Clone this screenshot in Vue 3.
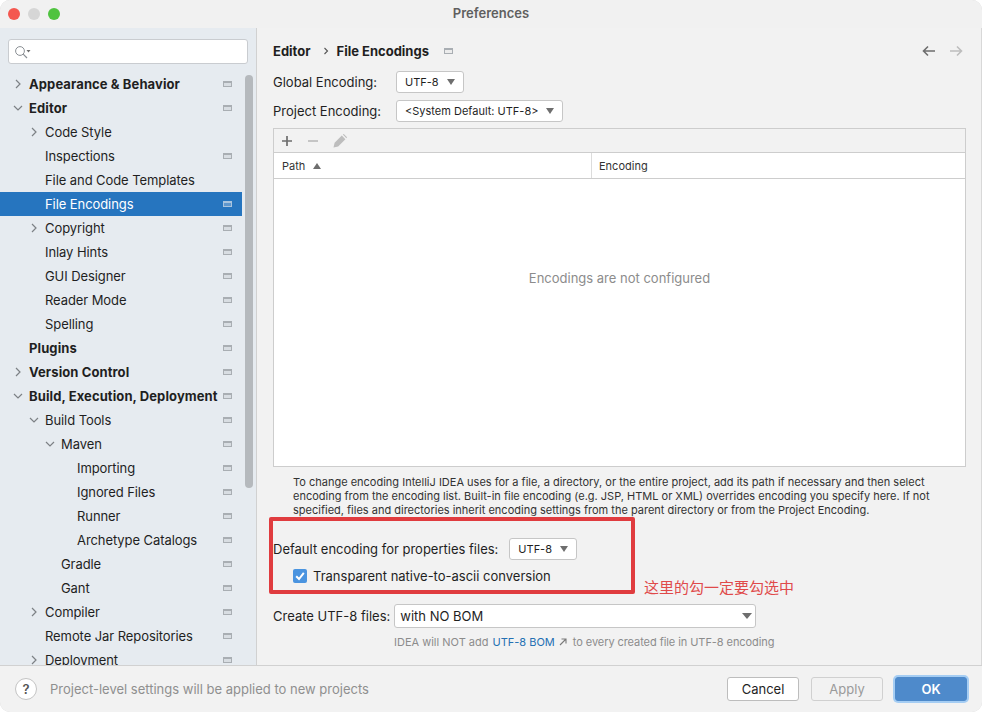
<script setup>
const tree = [
  { label: 'Appearance & Behavior', depth: 0, bold: true, arrow: 'right', badge: true },
  { label: 'Editor', depth: 0, bold: true, arrow: 'down', badge: true },
  { label: 'Code Style', depth: 1, arrow: 'right', badge: false },
  { label: 'Inspections', depth: 1, badge: true },
  { label: 'File and Code Templates', depth: 1, badge: false },
  { label: 'File Encodings', depth: 1, badge: true, selected: true },
  { label: 'Copyright', depth: 1, arrow: 'right', badge: true },
  { label: 'Inlay Hints', depth: 1, badge: true },
  { label: 'GUI Designer', depth: 1, badge: true },
  { label: 'Reader Mode', depth: 1, badge: true },
  { label: 'Spelling', depth: 1, badge: true },
  { label: 'Plugins', depth: 0, bold: true, badge: true },
  { label: 'Version Control', depth: 0, bold: true, arrow: 'right', badge: true },
  { label: 'Build, Execution, Deployment', depth: 0, bold: true, arrow: 'down', badge: true },
  { label: 'Build Tools', depth: 1, arrow: 'down', badge: true },
  { label: 'Maven', depth: 2, arrow: 'down', badge: true },
  { label: 'Importing', depth: 3, badge: true },
  { label: 'Ignored Files', depth: 3, badge: true },
  { label: 'Runner', depth: 3, badge: true },
  { label: 'Archetype Catalogs', depth: 3, badge: true },
  { label: 'Gradle', depth: 2, badge: true },
  { label: 'Gant', depth: 2, badge: true },
  { label: 'Compiler', depth: 1, arrow: 'right', badge: true },
  { label: 'Remote Jar Repositories', depth: 1, badge: true },
  { label: 'Deployment', depth: 1, arrow: 'right', badge: true }
]

const indent = (depth) => ({ paddingLeft: 29 + depth * 16 + 'px' })
const arrowLeft = (depth) => ({ left: 13 + depth * 16 + 'px' })
</script>

<template>
  <div class="window">
    <!-- TITLE BAR -->
    <header class="titlebar">
      <span class="light red"></span>
      <span class="light grey"></span>
      <span class="light green"></span>
      <span class="title">Preferences</span>
    </header>

    <div class="body">
      <!-- SIDEBAR -->
      <aside class="sidebar">
        <div class="search">
          <svg width="17" height="14" viewBox="0 0 17 14">
            <circle cx="6" cy="6" r="4.4" fill="none" stroke="#8a8f94" stroke-width="1" />
            <path d="M9.2 9.2 L13 13" stroke="#8a8f94" stroke-width="1.2" />
            <path d="M12.5 5 h4 l-2 2.4 z" fill="#6e6e6e" />
          </svg>
        </div>
        <div class="tree-wrap">
          <ul class="tree">
            <li
              v-for="item in tree"
              :key="item.label"
              :class="['row', { bold: item.bold, selected: item.selected }]"
              :style="indent(item.depth)"
            >
              <svg v-if="item.arrow" class="arrow" :style="arrowLeft(item.depth)" width="10" height="10" viewBox="0 0 10 10">
                <path v-if="item.arrow === 'right'" d="M3 1 L7 5 L3 9" fill="none" stroke="#7d8185" stroke-width="1.2" />
                <path v-else d="M1 3 L5 7 L9 3" fill="none" stroke="#7d8185" stroke-width="1.2" />
              </svg>
              <span class="row-label">{{ item.label }}</span>
              <span v-if="item.badge" class="badge"></span>
            </li>
          </ul>
          <div class="scroll-thumb"></div>
        </div>
      </aside>

      <!-- CONTENT -->
      <main class="content">
        <div class="heading">
          <span>Editor</span>
          <svg class="crumb" width="6" height="8" viewBox="0 0 6 8"><path d="M1.5 1 L4.5 4 L1.5 7" fill="none" stroke="#555" stroke-width="1.1" /></svg>
          <span>File Encodings</span>
          <span class="badge heading-badge"></span>
          <span class="nav-arrows">
            <svg width="14" height="12" viewBox="0 0 14 12"><path d="M13 6 H2 M6 1.5 L1.5 6 L6 10.5" fill="none" stroke="#6e6e6e" stroke-width="1.6" /></svg>
            <svg width="14" height="12" viewBox="0 0 14 12"><path d="M1 6 H12 M8 1.5 L12.5 6 L8 10.5" fill="none" stroke="#bdbdbd" stroke-width="1.6" /></svg>
          </span>
        </div>

        <div class="form-row global">
          <label class="lbl-wide">Global Encoding:</label>
          <div class="combo small w-68">UTF-8<i class="caret"></i></div>
        </div>
        <div class="form-row project">
          <label class="lbl-wide">Project Encoding:</label>
          <div class="combo small w-167">&lt;System Default: UTF-8&gt;<i class="caret"></i></div>
        </div>

        <section class="table">
          <div class="table-tools">
            <svg width="12" height="12" viewBox="0 0 12 12"><path d="M6 1 V11 M1 6 H11" stroke="#6e6e6e" stroke-width="1.7" /></svg>
            <svg width="12" height="12" viewBox="0 0 12 12"><path d="M1 6 H11" stroke="#bdbdbd" stroke-width="1.7" /></svg>
            <svg width="14" height="14" viewBox="0 0 14 14"><path d="M0.5 13.5 L1.6 8.8 L8.8 1.6 L12.4 5.2 L5.2 12.4 Z M9.8 0.6 L10.8 0 L14 3.2 L13.4 4.2 Z" fill="#bdbdbd" /></svg>
          </div>
          <div class="table-head">
            <div class="col-path">Path<i class="caret-up"></i></div>
            <div class="col-enc">Encoding</div>
          </div>
          <div class="table-empty">Encodings are not configured</div>
        </section>

        <p class="note">To change encoding IntelliJ IDEA uses for a file, a directory, or the entire project, add its path if necessary and then select encoding from the encoding list. Built-in file encoding (e.g. JSP, HTML or XML) overrides encoding you specify here. If not specified, files and directories inherit encoding settings from the parent directory or from the Project Encoding.</p>

        <div class="form-row props">
          <label>Default encoding for properties files:</label>
          <div class="combo small w-68">UTF-8<i class="caret"></i></div>
        </div>
        <div class="check-row">
          <span class="check">
            <svg width="14" height="14" viewBox="0 0 14 14"><path d="M3.2 7.2 L6 10 L10.8 3.8" fill="none" stroke="#fff" stroke-width="2" /></svg>
          </span>
          <span>Transparent native-to-ascii conversion</span>
        </div>
        <div class="form-row create">
          <label>Create UTF-8 files:</label>
          <div class="combo large">with NO BOM<i class="caret"></i></div>
        </div>
        <div class="hint">
          <span>IDEA will NOT add</span>
          <span class="link">UTF-8 BOM</span>
          <svg width="8" height="8" viewBox="0 0 8 8"><path d="M1 7 L6.5 1.5 M2.5 1 H7 V5.5" fill="none" stroke="#7a7a7a" stroke-width="1.1" /></svg>
          <span class="hint-tail">to every created file in UTF-8 encoding</span>
        </div>

        <!-- annotation drawn over the screenshot -->
        <div class="mark"></div>
        <div class="mark-text">这里的勾一定要勾选中</div>
      </main>
    </div>

    <!-- FOOTER -->
    <footer class="footer">
      <span class="help">?</span>
      <span class="footer-note">Project-level settings will be applied to new projects</span>
      <div class="buttons">
        <button class="btn">Cancel</button>
        <button class="btn disabled">Apply</button>
        <button class="btn primary">OK</button>
      </div>
    </footer>
  </div>
</template>

<style>
html, body {
  margin: 0;
  background: #fff;
}
</style>

<style scoped>
.window {
  width: 982px;
  height: 712px;
  display: flex;
  flex-direction: column;
  background: #f2f2f2;
  border-radius: 10px;
  overflow: hidden;
  font-family: Inter, "Liberation Sans", sans-serif;
  font-size: 13px;
  color: #1f1f1f;
  box-shadow: inset 0 0 0 1px #d8d8d8;
}

/* TITLE BAR */
.titlebar {
  height: 28px;
  flex: none;
  display: flex;
  align-items: center;
  gap: 8px;
  padding-left: 8px;
  position: relative;
  background: #f1f1f1;
}
.light {
  width: 12px;
  height: 12px;
  border-radius: 50%;
}
.red { background: #f4574f; }
.grey { background: #d6d6d6; }
.green { background: #4fc33f; }
.title {
  position: absolute;
  left: 0;
  right: 0;
  top: 5px;
  text-align: center;
  font-size: 13px;
  font-weight: 600;
  color: #5f5f5f;
}

.body {
  flex: 1;
  min-height: 0;
  display: flex;
}

/* SIDEBAR */
.sidebar {
  width: 256px;
  flex: none;
  background: #e6ebf0;
  border-right: 1px solid #d1d1d1;
  padding-top: 11px;
  display: flex;
  flex-direction: column;
  overflow: hidden;
}
.search {
  margin: 0 8px 0 8px;
  height: 23px;
  background: #fff;
  border: 1px solid #c9ccd0;
  border-radius: 3px;
  display: flex;
  align-items: center;
  padding-left: 5px;
  flex: none;
}
.tree-wrap {
  position: relative;
  margin-top: 8px;
  flex: 1;
  min-height: 0;
}
.tree {
  list-style: none;
  margin: 0;
  padding: 0;
  width: 242px;
  letter-spacing: -0.08px;
}
.row {
  position: relative;
  height: 24px;
  display: flex;
  align-items: center;
  box-sizing: border-box;
}
.row.bold {
  font-weight: 700;
  letter-spacing: 0.1px;
}
.row.selected {
  background: #2675bf;
  color: #fff;
}
.arrow {
  position: absolute;
  top: 7px;
}
.row-label { white-space: nowrap; }
.badge {
  display: block;
  width: 7px;
  height: 3px;
  border: 1px solid #a9aeb3;
  border-top-width: 2px;
  background: #d8dde2;
}
.row .badge {
  position: absolute;
  left: 223px;
  top: 9px;
}
.row.selected .badge {
  border-color: #a9c4de;
  background: #5f97cd;
}
.scroll-thumb {
  position: absolute;
  left: 245px;
  top: 3px;
  width: 8px;
  height: 413px;
  border-radius: 4px;
  background: #b5b9bd;
}

/* CONTENT */
.content {
  flex: 1;
  position: relative;
  padding: 0 16px;
  min-width: 0;
}
.heading {
  display: flex;
  align-items: center;
  height: 46px;
  font-weight: 700;
  color: #1f1f1f;
}
.crumb { margin: 0 8px 0 12px; }
.heading-badge {
  margin-left: 15px;
  background: #ececec;
}
.nav-arrows {
  margin-left: auto;
  display: flex;
  gap: 13px;
  padding-right: 3px;
}
.form-row {
  display: flex;
  align-items: center;
}
.form-row.global { height: 22px; margin-top: -3px; }
.form-row.project { height: 22px; margin-top: 7px; }
.lbl-wide { width: 123px; }
.combo {
  position: relative;
  box-sizing: border-box;
  background: #fff;
  border: 1px solid #c6c6c6;
  border-radius: 3px;
  display: flex;
  align-items: center;
}
.combo.small {
  height: 22px;
  font-size: 11px;
  padding-left: 8px;
}
.w-68 { width: 68px; }
.w-167 { width: 167px; }
.caret {
  position: absolute;
  right: 8px;
  top: 7px;
  width: 0;
  height: 0;
  border-left: 4.5px solid transparent;
  border-right: 4.5px solid transparent;
  border-top: 6px solid #6e6e6e;
}
.table {
  margin-top: 6px;
  height: 339px;
  box-sizing: border-box;
  border: 1px solid #cdcdcd;
  background: #fff;
  display: flex;
  flex-direction: column;
}
.table-tools {
  height: 24px;
  flex: none;
  background: #f2f2f2;
  border-bottom: 1px solid #cdcdcd;
  display: flex;
  align-items: center;
  padding-left: 7px;
  gap: 14px;
  box-sizing: border-box;
}
.table-head {
  height: 26px;
  flex: none;
  display: flex;
  border-bottom: 1px solid #cdcdcd;
  box-sizing: border-box;
  font-size: 11px;
  color: #333;
}
.col-path {
  width: 318px;
  padding-left: 8px;
  display: flex;
  align-items: center;
  box-sizing: border-box;
  border-right: 1px solid #dcdcdc;
}
.col-enc {
  padding-left: 7px;
  display: flex;
  align-items: center;
}
.caret-up {
  margin-left: 8px;
  width: 0;
  height: 0;
  border-left: 4.5px solid transparent;
  border-right: 4.5px solid transparent;
  border-bottom: 6px solid #6e6e6e;
}
.table-empty {
  flex: 1;
  display: flex;
  align-items: center;
  justify-content: center;
  color: #8c8c8c;
  padding-bottom: 89px;
}
.note {
  margin: 8px 0 0 20px;
  font-size: 11px;
  line-height: 14px;
  color: #333;
  width: 650px;
}
.form-row.props {
  margin-top: 21px;
  height: 22px;
  gap: 11px;
}
.check-row {
  margin: 7px 0 0 20px;
  display: flex;
  align-items: center;
  gap: 6px;
  height: 17px;
}
.check {
  width: 14px;
  height: 14px;
  background: #4a94e0;
  border-radius: 2px;
  display: flex;
}
.form-row.create {
  margin-top: 20px;
  height: 24px;
  gap: 4px;
}
.combo.large {
  width: 362px;
  height: 24px;
  padding-left: 5px;
}
.combo.large .caret {
  top: 8px;
  right: 3px;
  border-left-width: 5.5px;
  border-right-width: 5.5px;
}
.hint {
  margin: 7px 0 0 121px;
  font-size: 11px;
  color: #8c8c8c;
  display: flex;
  align-items: center;
  gap: 4px;
  height: 14px;
  white-space: nowrap;
}
.link { color: #2470b3; }
.hint-tail {
  margin-left: 2px;
  letter-spacing: -0.07px;
}

/* RED ANNOTATION */
.mark {
  position: absolute;
  left: 12px;
  top: 489px;
  width: 366px;
  height: 77px;
  box-sizing: border-box;
  border: 4px solid #e03c3f;
  border-radius: 2px;
}
.mark-text {
  position: absolute;
  left: 387px;
  top: 548px;
  font-family: "Noto Sans CJK SC", sans-serif;
  font-size: 15px;
  color: #e04a4a;
  white-space: nowrap;
}

/* FOOTER */
.footer {
  height: 47px;
  flex: none;
  background: #f2f2f2;
  border-top: 1px solid #d1d1d1;
  box-sizing: border-box;
  display: flex;
  align-items: center;
  padding: 0 15px;
}
.help {
  width: 22px;
  height: 22px;
  box-sizing: border-box;
  border: 1px solid #c4c4c4;
  border-radius: 50%;
  background: #fff;
  display: flex;
  align-items: center;
  justify-content: center;
  font-weight: 600;
  color: #555;
}
.footer-note {
  margin-left: 13px;
  color: #8f8f8f;
}
.buttons {
  margin-left: auto;
  display: flex;
  gap: 12px;
}
.btn {
  width: 72px;
  height: 24px;
  box-sizing: border-box;
  border: 1px solid #bdbdbd;
  border-radius: 3px;
  background: #fff;
  font: inherit;
  color: #1f1f1f;
  padding: 0;
}
.btn.disabled {
  background: #f2f2f2;
  border-color: #d0d0d0;
  color: #9a9a9a;
}
.btn.primary {
  background: #4e8acb;
  border-color: #4e8acb;
  color: #fff;
  font-weight: 600;
  box-shadow: 0 0 0 2px #a5cdf3;
}
</style>
